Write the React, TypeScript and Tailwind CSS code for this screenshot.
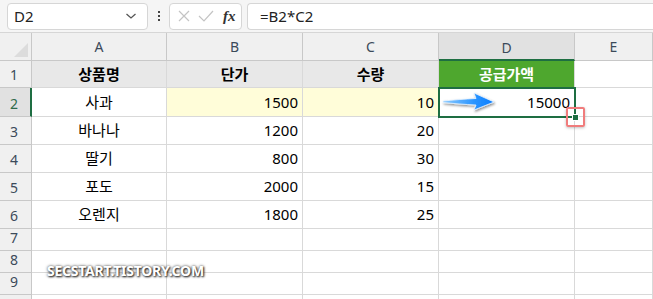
import React from "react";

const FONT = { fontFamily: '"Segoe UI", "Noto Sans", "Noto Sans CJK KR", sans-serif' };

const cols = ["A", "B", "C", "D", "E"];

type Row = { n: number; cells: string[]; h: string };

const rows: Row[] = [
  { n: 1, cells: ["상품명", "단가", "수량", "공급가액", ""], h: "h-[27px]" },
  { n: 2, cells: ["사과", "1500", "10", "15000", ""], h: "h-[29px]" },
  { n: 3, cells: ["바나나", "1200", "20", "", ""], h: "h-[28px]" },
  { n: 4, cells: ["딸기", "800", "30", "", ""], h: "h-[28px]" },
  { n: 5, cells: ["포도", "2000", "15", "", ""], h: "h-[28px]" },
  { n: 6, cells: ["오렌지", "1800", "25", "", ""], h: "h-[28px]" },
  { n: 7, cells: ["", "", "", "", ""], h: "h-[22px]" },
  { n: 8, cells: ["", "", "", "", ""], h: "h-[22px]" },
  { n: 9, cells: ["", "", "", "", ""], h: "h-[22px]" },
  { n: 10, cells: ["", "", "", "", ""], h: "h-[22px]" },
];

function FormulaBar() {
  return (
    <div className="flex h-[33px] items-center border-b border-[#d6d6d6] bg-[#f5f5f5] pl-[7px]">
      <div className="flex h-[27px] w-[141px] items-center justify-between rounded-[4px] border border-[#d6d6d6] bg-white pl-[6px] pr-[10px]">
        <span className="text-[15px] text-[#222]">D2</span>
        <svg width="12" height="8" viewBox="0 0 12 8">
          <path d="M1.5 2 L6 6 L10.5 2" fill="none" stroke="#555" strokeWidth="1.3" />
        </svg>
      </div>
      <div className="flex w-[21px] flex-col items-center justify-center gap-[2px]">
        <span className="h-[2px] w-[2px] bg-[#444]" />
        <span className="h-[2px] w-[2px] bg-[#444]" />
        <span className="h-[2px] w-[2px] bg-[#444]" />
      </div>
      <div className="flex h-[27px] w-[73px] items-center rounded-[4px] border border-[#d6d6d6] bg-white pl-[7px]">
        <svg width="14" height="14" viewBox="0 0 14 14">
          <path d="M2 2 L12 12 M12 2 L2 12" stroke="#c4c4c4" strokeWidth="1.2" />
        </svg>
        <svg width="18" height="14" viewBox="0 0 18 14" className="ml-[6px]">
          <path d="M2 7 L7 12 L16 2" fill="none" stroke="#c4c4c4" strokeWidth="1.2" />
        </svg>
        <span className="ml-[8px] font-['Liberation_Serif'] text-[15px] font-bold italic text-[#333]">fx</span>
      </div>
      <div className="ml-[5px] flex h-[27px] flex-1 items-center rounded-l-[4px] border border-r-0 border-[#d6d6d6] bg-white pl-[12px]">
        <span className="text-[15px] text-[#222]">=B2*C2</span>
      </div>
    </div>
  );
}

function Arrow() {
  return (
    <svg width="58" height="24" viewBox="0 0 58 24" className="absolute left-[2px] top-[2px]">
      <defs>
        <linearGradient id="ag" x1="0" y1="0" x2="1" y2="0">
          <stop offset="0" stopColor="#8ccbff" />
          <stop offset="0.6" stopColor="#2b95ff" />
          <stop offset="1" stopColor="#0a7dff" />
        </linearGradient>
        <filter id="sh" x="-20%" y="-40%" width="140%" height="180%">
          <feDropShadow dx="1" dy="1.5" stdDeviation="1.2" floodColor="#000" floodOpacity="0.45" />
        </filter>
      </defs>
      <path
        d="M2 11 C12 10 24 9 35 8.5 L33 3 L53 12 L33 20 L35 15 C24 14.5 12 13.5 2 12.5 Z"
        fill="url(#ag)"
        stroke="#e8f4ff"
        strokeWidth="0.8"
        filter="url(#sh)"
      />
    </svg>
  );
}

export default function App() {
  return (
    <div className="h-[299px] w-[653px] overflow-hidden bg-white" style={FONT}>
      <FormulaBar />
      <div className="relative grid grid-cols-[32px_135px_136px_136px_136px_78px]">
        {/* column header row */}
        <div className="relative h-[28px] border-b border-r border-[#c8c8c8] bg-[#f0f0f0]">
          <svg width="14" height="14" viewBox="0 0 14 14" className="absolute bottom-[3px] right-[3px]">
            <path d="M14 0 L14 14 L0 14 Z" fill="#dcdcdc" />
          </svg>
        </div>
        {cols.map((c) => (
          <div
            key={c}
            className={
              c === "D"
                ? "flex h-[28px] items-center justify-center border-b-2 border-r border-b-[#1e6e42] border-r-[#c8c8c8] bg-[#e1e1e1] pt-[2px] text-[14px] text-[#3b4a5a]"
                : "flex h-[28px] items-center justify-center border-b border-r border-[#c8c8c8] bg-[#f0f0f0] text-[14px] text-[#3b4a5a]"
            }
          >
            {c}
          </div>
        ))}

        {rows.map((r) => (
          <React.Fragment key={r.n}>
            <div
              className={
                r.n === 2
                  ? `flex ${r.h} items-end justify-start border-b border-r-2 border-b-[#c8c8c8] border-r-[#1e6e42] bg-[#e1e1e1] pb-[2px] pl-[10px] text-[14px] text-[#2f6b4a]`
                  : `flex ${r.h} items-end justify-start border-b border-r border-[#c8c8c8] bg-[#f0f0f0] pb-[2px] pl-[10px] text-[14px] text-[#3b4a5a]`
              }
            >
              {r.n < 10 ? r.n : ""}
            </div>
            {r.cells.map((v, i) => {
              const header = r.n === 1;
              const isD = i === 3;
              const numeric = !header && i > 0;
              let bg = "bg-white";
              if (header && i < 3) bg = "bg-[#e8e8e8]";
              if (header && isD) bg = "bg-[#4ea72e]";
              if (r.n === 2 && (i === 1 || i === 2)) bg = "bg-[#fffdd9]";
              const color = header && isD ? "text-white" : "text-black";
              const weight = header && i < 4 ? "font-bold" : "";
              const align = numeric ? "justify-end pr-[4px]" : "justify-center";
              const selected = r.n === 2 && isD;
              return (
                <div
                  key={i}
                  className={`relative flex ${r.h} items-center ${align} ${bg} ${color} ${weight} border-b border-r border-[#d9d9d9] text-[15px] ${
                    selected ? "z-10 outline-2 -outline-offset-1 outline-[#1e6e42]" : ""
                  }`}
                >
                  {selected && <Arrow />}
                  <span className="relative">{v}</span>
                  {selected && (
                    <>
                      <span className="absolute -bottom-[5px] -right-[5px] h-[7px] w-[7px] border border-white bg-[#1e6e42]" />
                      <span className="absolute -bottom-[11px] -right-[11px] h-[20px] w-[19px] rounded-[2px] border-2 border-[#f07c7c] shadow-[0_1px_3px_rgba(0,0,0,0.25)]" />
                    </>
                  )}
                </div>
              );
            })}
          </React.Fragment>
        ))}

        <div className="pointer-events-none absolute left-[47px] top-[227px] font-['Noto_Sans'] text-[14px] font-bold tracking-[-0.25px] text-white [text-shadow:1px_1px_2px_#222,0_0_3px_#444]">
          SECSTART.TISTORY.COM
        </div>
      </div>
    </div>
  );
}
